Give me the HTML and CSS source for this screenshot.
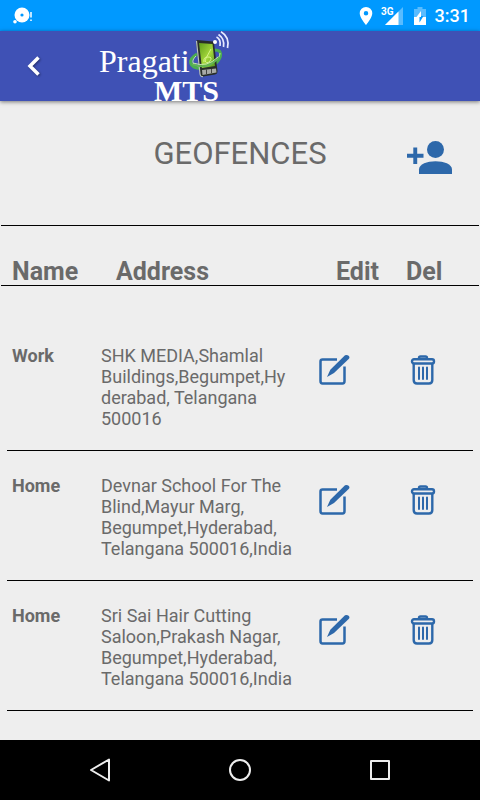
FILE: index.html
```
<!DOCTYPE html>
<html lang="en">
  <head>
    <meta charset="UTF-8" />
    <meta name="viewport" content="width=device-width, initial-scale=1.0" />
    <title>Pragati MTS - Geofences</title>
    <link rel="stylesheet" href="styles.css">
  </head>
  <body>
    <!-- Shared icons -->
    <svg class="sprite" aria-hidden="true">
      <symbol id="icon-edit" viewBox="0 0 32 32">
        <path d="M19 5.500H4.500Q2.500 5.500 2.500 7.500V27Q2.500 29.500 4.500 29.500H24.500Q26.500 29.500 26.500 27V12.500" fill="none" stroke="currentColor" stroke-width="2.500" />
        <path d="M27 1.300Q29 .3 30.600 1.800T30.700 5L16 19L9 23L12.300 15.800Z" fill="currentColor" />
      </symbol>
      <symbol id="icon-delete" viewBox="0 0 26 32">
        <g fill="none" stroke="currentColor" stroke-width="2.400">
          <path d="M9 5V4Q9 2.500 10.500 2.500H15.500Q17 2.500 17 4V5" />
          <rect x="2" y="5.200" width="22" height="4.300" rx="2" />
          <path d="M3.700 9.500V26Q3.700 29.500 7 29.500H19Q22.300 29.500 22.300 26V9.500" />
          <path d="M9 13.500V25M13 13.500V25M17 13.500V25" stroke-width="2" stroke-linecap="round" />
        </g>
      </symbol>
    </svg>

    <div class="status-bar">
      <svg class="notification" viewBox="0 0 22 18">
        <circle cx="10" cy="8" r="7.500" fill="#fff" />
        <circle cx="3" cy="14.800" r="1.800" fill="#fff" />
        <circle cx="10" cy="8" r="1.600" fill="#0099ff" />
        <path d="M19 5V10.500M19 12.500V14" stroke="#fff" stroke-width="1.500" />
      </svg>
      <div class="status-icons">
        <svg width="14" height="20" viewBox="0 0 14 20">
          <path fill="#fff" fill-rule="evenodd" d="M7 1A6.300 6.300 0 0 0 .7 7.300C.7 12 7 19 7 19S13.300 12 13.300 7.300A6.300 6.300 0 0 0 7 1ZM7 5A2.200 2.200 0 1 1 7 9.500A2.200 2.200 0 1 1 7 5Z" />
        </svg>
        <svg width="24" height="20" viewBox="0 0 24 20">
          <path d="M22 1V19H4Z" fill="#fff" opacity=".35" />
          <path d="M17.500 5.500V19H4Z" fill="#fff" />
          <path d="M0 0H12V10H0Z" fill="#0099ff" />
          <text x="0" y="9" class="network">3G</text>
        </svg>
        <svg width="14" height="20" viewBox="0 0 14 20">
          <path d="M1 3H4.500V1H9.500V3H13V11H1Z" fill="#fff" opacity=".35" />
          <path d="M1 11H13V19H1Z" fill="#fff" />
          <path d="M8 5V11H3.500Z" fill="#fff" />
          <path d="M10.500 10L6.500 16.500V11H8V10Z" fill="#0099ff" />
        </svg>
        <span class="clock">3:31</span>
      </div>
    </div>

    <header class="app-bar">
      <button class="back-button" type="button" aria-label="Back">
        <svg width="16" height="22" viewBox="0 0 16 22">
          <path d="M12.500 2.500L4 11L12.500 19.500" fill="none" stroke="#fff" stroke-width="3.500" />
        </svg>
      </button>
      <svg class="logo" width="134" height="70" viewBox="0 0 134 70" role="img" aria-label="Pragati MTS">
        <defs>
          <linearGradient id="screen" x1="0" y1="0" x2="1" y2="1">
            <stop offset="0" stop-color="#5f9e1c" />
            <stop offset=".55" stop-color="#a5d83b" />
            <stop offset="1" stop-color="#4d9320" />
          </linearGradient>
        </defs>
        <text x="1" y="41" class="logo-name">Pragati</text>
        <text x="56" y="70" class="logo-suffix">MTS</text>
        <path d="M99 23C89 29 91 37 103 37.500C117 38 125 26 122 21Q121 19 116 19" fill="none" stroke="#4cae50" stroke-width="3" />
        <path d="M98 25C92 31 95 35 104 35.500C114 35 122 28 122 22" fill="none" stroke="#c4e9ae" stroke-width="1" />
        <path d="M99 9L115 10.500Q116 10.500 116 12L119.500 40Q119.500 43 117 43.500L105 45.500Q102 46 102 43L98 11Z" fill="#282e29" />
        <path d="M98.500 10L102 43Q102.500 46 105 45.500" fill="none" stroke="#b8c0bb" stroke-width="1.200" />
        <path d="M101 12L114.500 13L117 35L104 37Z" fill="url(#screen)" />
        <path d="M106 31Q105 26 110 26T112 30Q108 34 107 29L113 18" fill="none" stroke="#d7f48a" stroke-width="1" />
        <path d="M104 39L118 37.500L118.500 41.500L104.500 44Z" fill="#a8aaa7" />
        <path d="M108.500 38.500V43M113.500 38V42" stroke="#444" stroke-width="1" />
        <path d="M94 33Q110 40 121 26" fill="none" stroke="#62b554" stroke-width="2" />
        <path d="M95 32Q109 37 120 26" fill="none" stroke="#c4e9ae" stroke-width="1" />
        <circle cx="117" cy="11" r="2" fill="#fff" />
        <path d="M118.500 6Q123 8 122 15M120.500 3.500Q127 8 125.500 16M123 .7Q132 6 129.500 17" fill="none" stroke="#e7eaff" stroke-width="1.700" />
      </svg>
    </header>

    <main>
      <div class="title-row">
        <h1>GEOFENCES</h1>
        <button class="add-button" type="button" aria-label="Add geofence">
          <svg width="46" height="36" viewBox="0 0 46 36">
            <path d="M0 13.800H6.300V7.500H10.200V13.800H16.500V17.700H10.200V24H6.300V17.700H0Z" fill="currentColor" />
            <circle cx="28.500" cy="9.500" r="8.500" fill="currentColor" />
            <path d="M12 34V29.500C12 18.500 45 18.500 45 29.500V34Z" fill="currentColor" />
          </svg>
        </button>
      </div>

      <table class="geofences">
        <thead>
          <tr>
            <th scope="col">Name</th>
            <th scope="col">Address</th>
            <th scope="col">Edit</th>
            <th scope="col">Del</th>
          </tr>
        </thead>
        <tbody>
          <tr>
            <th scope="row">Work</th>
            <td class="address">SHK MEDIA,Shamlal Buildings,Begumpet,Hyderabad, Telangana 500016</td>
            <td><button type="button" aria-label="Edit Work"><svg width="32" height="32"><use href="#icon-edit" /></svg></button></td>
            <td><button type="button" aria-label="Delete Work"><svg width="26" height="32"><use href="#icon-delete" /></svg></button></td>
          </tr>
          <tr>
            <th scope="row">Home</th>
            <td class="address">Devnar School For The Blind,Mayur Marg, Begumpet,Hyderabad, Telangana 500016,India</td>
            <td><button type="button" aria-label="Edit Home"><svg width="32" height="32"><use href="#icon-edit" /></svg></button></td>
            <td><button type="button" aria-label="Delete Home"><svg width="26" height="32"><use href="#icon-delete" /></svg></button></td>
          </tr>
          <tr>
            <th scope="row">Home</th>
            <td class="address">Sri Sai Hair Cutting Saloon,Prakash Nagar, Begumpet,Hyderabad, Telangana 500016,India</td>
            <td><button type="button" aria-label="Edit Home"><svg width="32" height="32"><use href="#icon-edit" /></svg></button></td>
            <td><button type="button" aria-label="Delete Home"><svg width="26" height="32"><use href="#icon-delete" /></svg></button></td>
          </tr>
        </tbody>
      </table>
    </main>

    <nav class="nav-bar">
      <button type="button" aria-label="Back">
        <svg width="24" height="24" viewBox="0 0 24 24"><path d="M21 1.500V22.500L3 12Z" /></svg>
      </button>
      <button type="button" aria-label="Home">
        <svg width="24" height="24" viewBox="0 0 24 24"><circle cx="12" cy="12" r="10" /></svg>
      </button>
      <button type="button" aria-label="Recent apps">
        <svg width="24" height="24" viewBox="0 0 24 24"><rect x="3" y="3" width="18" height="18" /></svg>
      </button>
    </nav>
  </body>
</html>
```

FILE: styles.css
```
:root {
  --status-color: #0099ff;
  --bar-color: #3f51b5;
  --bg-color: #eeeeee;
  --text-color: #6a6a6a;
  --icon-color: #2d68aa;
}

body {
  margin: 0;
  min-height: 100vh;
  display: flex;
  flex-direction: column;
  font-family: Roboto, sans-serif;
  background-color: var(--bg-color);
  color: var(--text-color);
}

button {
  padding: 0;
  border: none;
  background: none;
  color: var(--icon-color);
  cursor: pointer;
}

svg {
  display: block;
}

.sprite {
  display: none;
}

/* Status bar */
.status-bar {
  display: flex;
  justify-content: space-between;
  align-items: center;
  height: 31px;
  padding: 0 10px 0 12px;
  background-color: var(--status-color);
}

.notification {
  width: 22px;
  height: 18px;
}

.status-icons {
  display: flex;
  align-items: center;
  gap: 8px;
}

.network {
  font-size: 10px;
  font-weight: bold;
  fill: #fff;
}

.clock {
  font-size: 18px;
  font-weight: 500;
  line-height: 24px;
  color: #fff;
}

/* App bar */
.app-bar {
  display: flex;
  align-items: center;
  gap: 56px;
  height: 70px;
  padding-left: 26px;
  background-color: var(--bar-color);
  box-shadow: 0 1px 4px rgba(0, 0, 0, 0.5);
}

.back-button svg {
  filter: drop-shadow(1px 1px 1px rgba(0, 0, 0, 0.4));
}

.logo {
  overflow: visible;
}

.logo-name,
.logo-suffix {
  font-family: "Liberation Serif", serif;
  fill: #fff;
}

.logo-name {
  font-size: 32px;
}

.logo-suffix {
  font-size: 30px;
  font-weight: bold;
}

/* Content */
main {
  flex-grow: 1;
}

.title-row {
  display: grid;
  grid-template-columns: 1fr auto 1fr;
  align-items: center;
  padding: 29px 27px 39px;
}

.title-row h1 {
  grid-column: 2;
  margin: 0 0 8px;
  font-size: 31px;
  font-weight: normal;
  line-height: 48px;
}

.add-button {
  justify-self: end;
}

.geofences {
  display: block;
}

.geofences thead,
.geofences tbody {
  display: block;
}

.geofences tr {
  display: grid;
}

.geofences th,
.geofences td {
  padding: 0;
  text-align: left;
}

.geofences thead {
  margin: 0 1px;
  border-top: 1px solid #000;
  border-bottom: 1px solid #000;
}

.geofences thead tr {
  grid-template-columns: 104px 1fr 70px 63px;
  padding: 32px 10px 0 11px;
}

.geofences thead th {
  font-size: 25px;
  line-height: 27px;
}

.geofences tbody {
  margin: 0 7px;
  padding-top: 35px;
}

.geofences tbody tr {
  grid-template-columns: 89px 1fr 92px 63px;
  padding: 24px 0 21px 5px;
  border-bottom: 1px solid #000;
}

.geofences tbody th,
.address {
  font-size: 18px;
  line-height: 21px;
}

.geofences tbody button {
  margin-top: 9px;
}

.geofences .address {
  padding-right: 25px;
  overflow-wrap: anywhere;
}

/* Navigation bar */
.nav-bar {
  display: flex;
  justify-content: center;
  align-items: center;
  gap: 116px;
  height: 60px;
  background-color: #000;
}

.nav-bar svg {
  fill: none;
  stroke: #eee;
  stroke-width: 2;
  stroke-linejoin: round;
}
```
